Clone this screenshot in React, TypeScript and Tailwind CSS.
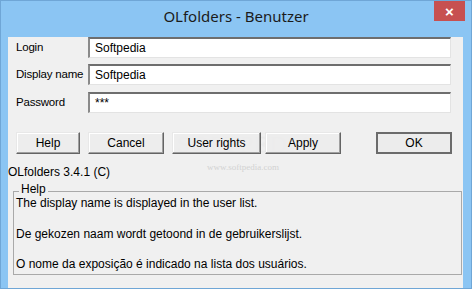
import React from 'react';

const fields = [
  { label: 'Login', value: 'Softpedia', top: 'mt-[6px]' },
  { label: 'Display name', value: 'Softpedia', top: 'mt-[6px]' },
  { label: 'Password', value: '***', top: 'mt-[7px]' },
];

const buttons = [
  { label: 'Help', w: 'w-[64px]', ml: 'ml-[8px]' },
  { label: 'Cancel', w: 'w-[76px]', ml: 'ml-[8px]' },
  { label: 'User rights', w: 'w-[89px]', ml: 'ml-[8px]' },
  { label: 'Apply', w: 'w-[76px]', ml: 'ml-[4px]' },
];

const Field: React.FC<{ label: string; value: string; top: string }> = ({ label, value, top }) => (
  <div className={`flex h-[21px] items-center ${top}`}>
    <span className="w-[80px] whitespace-nowrap pl-[8px] text-[11.5px] tracking-[-0.2px] text-black">{label}</span>
    <div className="h-[21px] w-[363px] border-t-2 border-l-2 border-b border-r border-t-[#6e6e6e] border-l-[#8a8a8a] border-b-[#e3e3e3] border-r-[#e3e3e3] bg-white pl-[5px] text-[12px] leading-[18px] text-black">
      {value}
    </div>
  </div>
);

const WinButton: React.FC<{ label: string; w: string; ml: string; isDefault?: boolean }> = ({ label, w, ml, isDefault }) => (
  <div
    className={`${w} ${ml} relative z-10 h-[22px] flex items-center justify-center text-[12px] text-black ${
      isDefault
        ? 'border-2 border-[#6b6b6b] bg-[#ececec]'
        : 'border border-t-[#e8e8e8] border-l-[#e8e8e8] border-b-[#646464] border-r-[#646464] bg-[#ececec]/80 shadow-[inset_-1px_-1px_0_#a0a0a0,inset_1px_1px_0_#ffffff]'
    }`}
  >
    {label}
  </div>
);

export default function App() {
  return (
    <div className="relative h-[289px] w-[472px] overflow-hidden border border-[#6fa6d6] bg-[#8bc5f3] font-['Liberation_Sans',Arial,sans-serif]">
      {/* title bar */}
      <div className="relative flex h-[30px] items-center justify-center">
        <span className="font-['Noto_Sans',sans-serif] text-[15px] text-[#1b1b1b]">OLfolders - Benutzer</span>
        <div className="absolute right-[6px] top-0 flex h-[20px] w-[31px] items-center justify-center bg-[#c75050] text-[15px] font-bold leading-none text-white">
          ×
        </div>
      </div>

      {/* client area */}
      <div className="ml-[7px] h-[251px] w-[455px] bg-[#f0f0f0]">
        <div>
          {fields.map((f) => (
            <Field key={f.label} {...f} />
          ))}
        </div>

        <div className="mt-[19px] flex">
          {buttons.map((b) => (
            <WinButton key={b.label} {...b} />
          ))}
          <WinButton label="OK" w="w-[76px]" ml="ml-[35px]" isDefault />
        </div>

        <div className="mt-[11px] text-[12px] leading-[15px] text-black">OLfolders 3.4.1 (C)</div>

        {/* Help group box */}
        <div className="relative ml-[5px] mt-[11px] h-[84px] w-[449px] border border-[#a9a9a9] px-[2px] pt-[4px]">
          <span className="absolute -top-[9px] left-[5px] bg-[#f0f0f0] px-[2px] text-[12px] leading-[12px] text-black">Help</span>
          <div className="text-[12px] leading-[14px] text-black">The display name is displayed in the user list.</div>
          <div className="mt-[17px] text-[12px] leading-[14px] text-black">De gekozen naam wordt getoond in de gebruikerslijst.</div>
          <div className="mt-[16px] text-[12px] leading-[14px] text-black">O nome da exposição é indicado na lista dos usuários.</div>
        </div>
      </div>

      {/* watermark */}
      <div className="pointer-events-none absolute left-[176px] top-[131px] font-['Liberation_Serif',serif] text-[24px] leading-none tracking-[1px] text-white/40 [text-shadow:0_0_1px_#dddddd]">
        SOFTPEDIA
      </div>
      <div className="pointer-events-none absolute left-[206px] top-[162px] font-['Liberation_Serif',serif] text-[9px] leading-none text-[#d2d2d2]">
        www.softpedia.com
      </div>
    </div>
  );
}
